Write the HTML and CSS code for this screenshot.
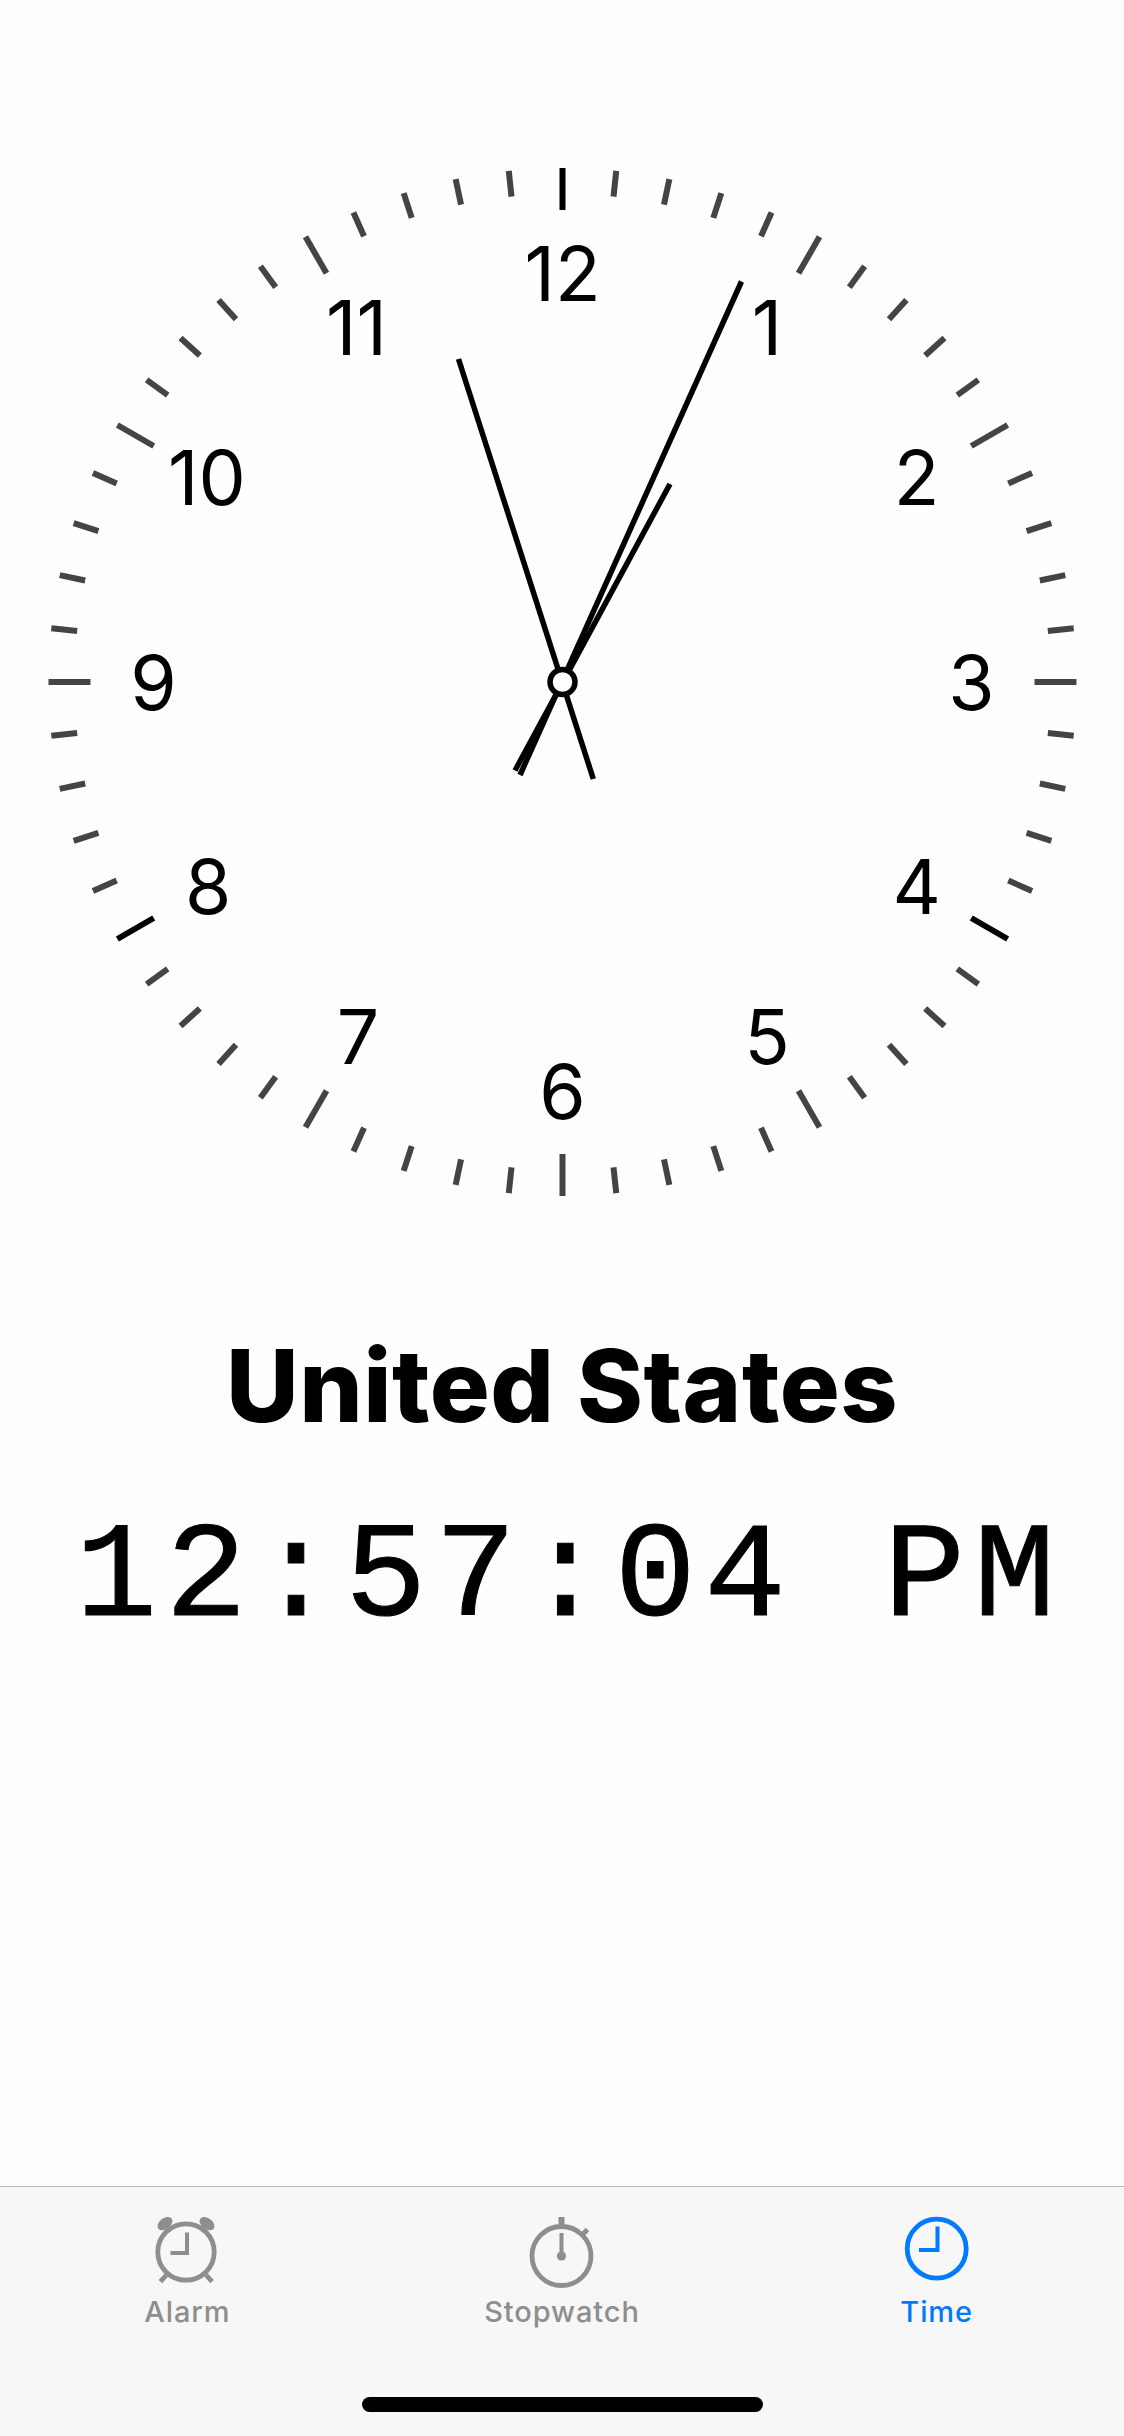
FILE: index.html
```html
<!DOCTYPE html>
<html>
<head>
    <link rel="stylesheet" href="styles.css">
</head>
<body>
    <div class="page">
        <main class="content">
            <svg class="clock" width="1124" height="1068" viewBox="-562.5 -534 1124 1068">
                <g id="ticks"></g>
                <text class="num" x="0" y="-409">12</text>
                <text class="num" x="204.5" y="-354.2">1</text>
                <text class="num" x="354.2" y="-204.5">2</text>
                <text class="num" x="409" y="0">3</text>
                <text class="num" x="354.2" y="204.5">4</text>
                <text class="num" x="204.5" y="354.2">5</text>
                <text class="num" x="0" y="409">6</text>
                <text class="num" x="-204.5" y="354.2">7</text>
                <text class="num" x="-354.2" y="204.5">8</text>
                <text class="num" x="-409" y="0">9</text>
                <text class="num" x="-355.5" y="-204.5">10</text>
                <text class="num" x="-206" y="-354.2">11</text>
                <line class="hand" x1="-42.5" y1="93" x2="179" y2="-400.5"/>
                <line class="hand" x1="-47.5" y1="88.5" x2="107.5" y2="-198"/>
                <line class="hand" x1="30.8" y1="97" x2="-104" y2="-323"/>
                <circle class="pivot" cx="0" cy="0" r="12.5"/>
            </svg>
            <h1 class="country">United States</h1>
            <div class="time">12:57:04 PM</div>
        </main>

        <footer class="tabbar">
            <nav class="tabs">
                <div class="tab">
                    <svg class="tab-icon" width="80" height="76" viewBox="0 0 80 76">
                        <ellipse class="fill" cx="18" cy="9.6" rx="8.4" ry="5.4" transform="rotate(-38 18 9.6)"/>
                        <ellipse class="fill" cx="60" cy="9.6" rx="8.4" ry="5.4" transform="rotate(38 60 9.6)"/>
                        <line class="line" x1="13.4" y1="67.7" x2="19.4" y2="61"/>
                        <line class="line" x1="65" y1="67.7" x2="59" y2="61"/>
                        <circle class="line" cx="39" cy="38" r="28.2"/>
                        <path class="line thin" d="M40 18.5V39H23.5"/>
                    </svg>
                    <span class="tab-label">Alarm</span>
                </div>
                <div class="tab">
                    <svg class="tab-icon" width="80" height="76" viewBox="0 0 80 76">
                        <rect class="fill" x="36.5" y="3" width="6" height="10"/>
                        <line class="line" x1="60" y1="21" x2="65.5" y2="15.5"/>
                        <circle class="line" cx="39.5" cy="42" r="29.5"/>
                        <line class="line thin" x1="39.5" y1="19" x2="39.5" y2="42"/>
                        <circle class="fill" cx="39.5" cy="42" r="4.6"/>
                    </svg>
                    <span class="tab-label">Stopwatch</span>
                </div>
                <div class="tab active">
                    <svg class="tab-icon" width="80" height="76" viewBox="0 0 80 76">
                        <circle class="line" cx="39.7" cy="34.7" r="29.5"/>
                        <path class="line thin" d="M40.5 12.5V36H22"/>
                    </svg>
                    <span class="tab-label">Time</span>
                </div>
            </nav>
            <div class="home-bar"></div>
        </footer>
    </div>

    <script>
        const ticks = document.getElementById('ticks');
        for (let i = 0; i < 60; i++) {
            const major = i % 5 === 0;
            const dark = i === 0 || i === 20 || i === 40;
            const tick = document.createElementNS('http://www.w3.org/2000/svg', 'line');
            tick.setAttribute('y1', -514);
            tick.setAttribute('y2', major ? -472 : -488);
            tick.setAttribute('transform', `rotate(${i * 6})`);
            tick.setAttribute('class', major ? (dark ? 'tick major dark' : 'tick major') : 'tick');
            ticks.appendChild(tick);
        }
    </script>
</body>
</html>
```

FILE: styles.css
```css
html,
body {
    margin: 0;
    padding: 0;
}

body {
    background: #fefefe;
    color: #000;
    font-family: Inter, "Liberation Sans", sans-serif;
}

.page {
    display: flex;
    flex-direction: column;
    width: 1124px;
    height: 2436px;
    overflow: hidden;
}

.content {
    flex: 1;
    padding-top: 148px;
    text-align: center;
}

.clock {
    display: block;
}

.tick {
    stroke: #444;
    stroke-width: 6;
}

.tick.dark {
    stroke: #000;
}

.num {
    font-family: Inter, "Liberation Sans", sans-serif;
    font-size: 75px;
    text-anchor: middle;
    dominant-baseline: central;
    fill: #000;
}

.hand {
    stroke: #000;
    stroke-width: 5.5;
}

.pivot {
    fill: #fff;
    stroke: #000;
    stroke-width: 5.5;
}

.country {
    margin: 112px 0 0;
    font-size: 100px;
    font-weight: 800;
    line-height: 116px;
    letter-spacing: 0.5px;
}

.time {
    margin-top: 50px;
    padding-left: 15px;
    font-family: "Liberation Mono", monospace;
    font-size: 136px;
    line-height: 170px;
    letter-spacing: 8.2px;
    white-space: pre;
    -webkit-text-stroke: 1px #000;
}

.tabbar {
    height: 250px;
    box-sizing: border-box;
    background: #f7f7f7;
    border-top: 1px solid #b8b8b8;
}

.tabs {
    display: grid;
    grid-template-columns: repeat(3, 1fr);
    padding-top: 27px;
}

.tab {
    display: flex;
    flex-direction: column;
    align-items: center;
    color: #8e8e8e;
}

.tab.active {
    color: #007aff;
}

.tab-icon {
    display: block;
}

.tab-icon .line {
    fill: none;
    stroke: currentColor;
    stroke-width: 4.8;
}

.tab-icon .thin {
    stroke-width: 4;
}

.tab-icon .fill {
    fill: currentColor;
}

.tab-label {
    font-size: 29px;
    font-weight: 500;
    line-height: 34px;
    letter-spacing: 0.9px;
    margin-top: 5px;
}

.home-bar {
    width: 401px;
    height: 15px;
    margin: 68px auto 0;
    background: #000;
    border-radius: 8px;
}
```
